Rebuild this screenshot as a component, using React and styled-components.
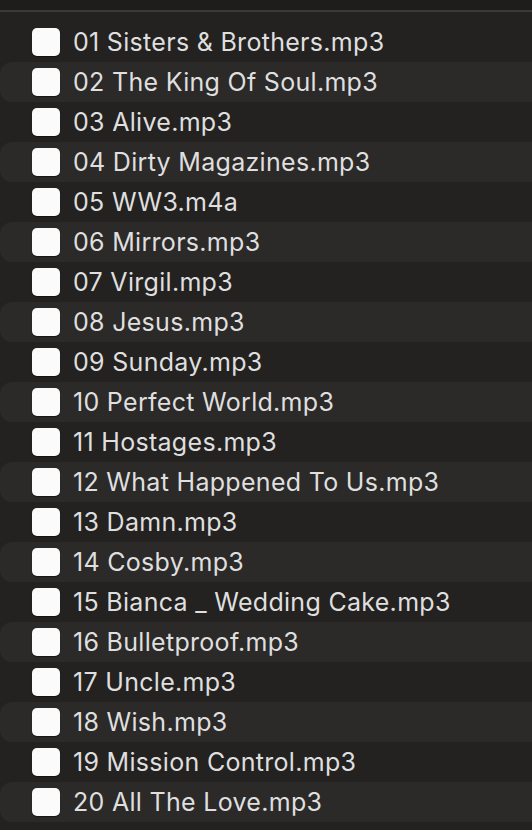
import React from 'react'
import styled, { createGlobalStyle } from 'styled-components';

const tracks = [
    '01 Sisters & Brothers.mp3',
    '02 The King Of Soul.mp3',
    '03 Alive.mp3',
    '04 Dirty Magazines.mp3',
    '05 WW3.m4a',
    '06 Mirrors.mp3',
    '07 Virgil.mp3',
    '08 Jesus.mp3',
    '09 Sunday.mp3',
    '10 Perfect World.mp3',
    '11 Hostages.mp3',
    '12 What Happened To Us.mp3',
    '13 Damn.mp3',
    '14 Cosby.mp3',
    '15 Bianca _ Wedding Cake.mp3',
    '16 Bulletproof.mp3',
    '17 Uncle.mp3',
    '18 Wish.mp3',
    '19 Mission Control.mp3',
    '20 All The Love.mp3',
];

const GlobalStyle = createGlobalStyle`
    html, body {
        margin: 0;
        padding: 0;
        background: #232221;
        font-family: Inter, "Noto Sans", "Liberation Sans", sans-serif;
        -webkit-font-smoothing: antialiased;
    }
`;

const App = () => {
    return (
        <>
            <GlobalStyle />
            <Window>
                <TopBar />
                <List>
                    {tracks.map((name, i) => (
                        <Row key={name} striped={i % 2 === 1}>
                            <Check />
                            <Name>{name}</Name>
                        </Row>
                    ))}
                </List>
            </Window>
        </>
    )
}

const Window = styled.div`
    width: 532px;
    height: 830px;
    background: #232221;
    overflow: hidden;
`;

const TopBar = styled.div`
    height: 10px;
    background: #1e1d1c;
    border-bottom: 2px solid #3a3a3a;
`;

const List = styled.div`
    display: flex;
    flex-direction: column;
    padding-top: 10px;
`;

const Row = styled.div.withConfig({ shouldForwardProp: (p) => p !== 'striped' })`
    display: flex;
    align-items: center;
    gap: 13px;
    height: 40px;
    padding-left: 32px;
    border-radius: 12px 0 0 12px;
    background: ${(p) => (p.striped ? '#2b2a29' : 'transparent')};
`;

const Check = styled.div`
    width: 28px;
    height: 28px;
    flex-shrink: 0;
    border-radius: 5px;
    background: #fbfbfb;
    box-shadow: 0 1px 1px rgba(0, 0, 0, 0.5);
    margin-top: -1px;
`;

const Name = styled.span`
    font-size: 25px;
    color: #dfdfdf;
    white-space: nowrap;
    letter-spacing: 0.3px;
`;

export default App;
